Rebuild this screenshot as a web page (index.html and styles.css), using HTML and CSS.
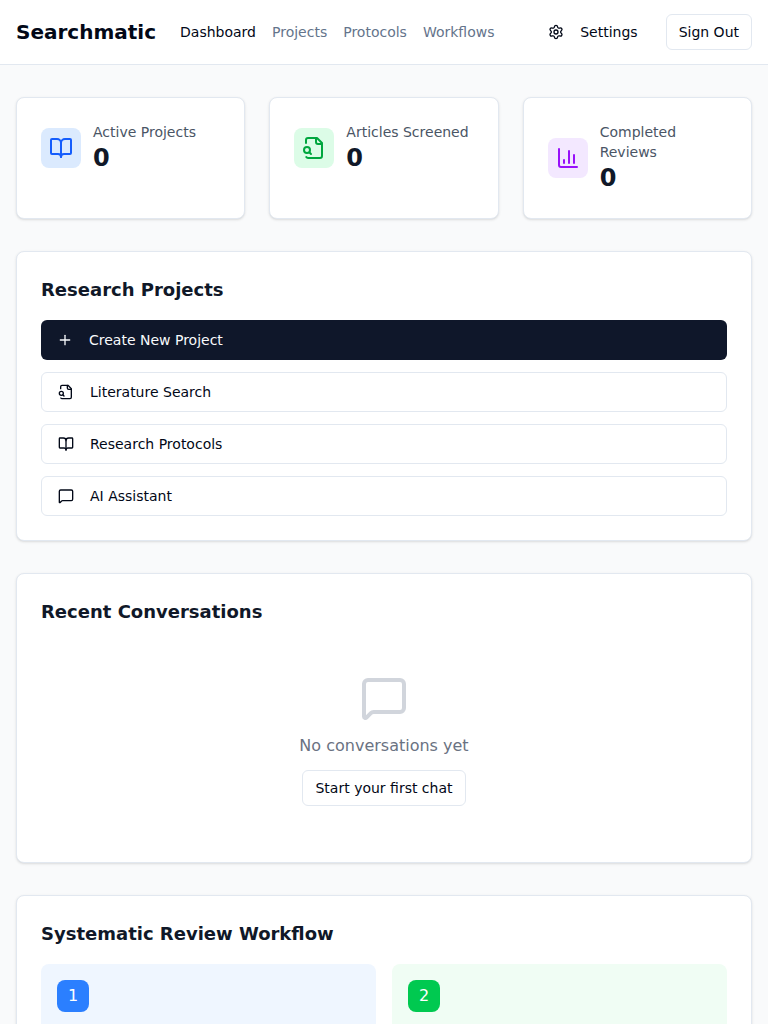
FILE: index.html
```html
<!DOCTYPE html>
<html lang="en">
<head>
<meta charset="utf-8">
<title>Searchmatic</title>
<link rel="stylesheet" href="styles.css">
</head>
<body>
<svg class="sprite" aria-hidden="true">
  <symbol id="book" viewBox="0 0 24 24"><path d="M12 7v14"/><path d="M3 18a1 1 0 0 1-1-1V4a1 1 0 0 1 1-1h5a4 4 0 0 1 4 4 4 4 0 0 1 4-4h5a1 1 0 0 1 1 1v13a1 1 0 0 1-1 1h-6a3 3 0 0 0-3 3 3 3 0 0 0-3-3z"/></symbol>
  <symbol id="file-search" viewBox="0 0 24 24"><path d="M14 2v4a2 2 0 0 0 2 2h4"/><path d="M4.268 21a2 2 0 0 0 1.727 1H18a2 2 0 0 0 2-2V7l-5-5H6a2 2 0 0 0-2 2v3"/><path d="m9 18-1.5-1.5"/><circle cx="5" cy="14" r="3"/></symbol>
  <symbol id="chart" viewBox="0 0 24 24"><path d="M3 3v16a2 2 0 0 0 2 2h16"/><path d="M18 17V9"/><path d="M13 17V5"/><path d="M8 17v-3"/></symbol>
  <symbol id="message" viewBox="0 0 24 24"><path d="M22 17a2 2 0 0 1-2 2H6.828a2 2 0 0 0-1.414.586l-2.202 2.202A.71.71 0 0 1 2 21.286V5a2 2 0 0 1 2-2h16a2 2 0 0 1 2 2z"/></symbol>
  <symbol id="plus" viewBox="0 0 24 24"><path d="M5 12h14"/><path d="M12 5v14"/></symbol>
  <symbol id="gear" viewBox="0 0 24 24"><path d="M9.671 4.136a2.34 2.34 0 0 1 4.659 0 2.34 2.34 0 0 0 3.319 1.915 2.34 2.34 0 0 1 2.33 4.033 2.34 2.34 0 0 0 0 3.831 2.34 2.34 0 0 1-2.33 4.033 2.34 2.34 0 0 0-3.319 1.915 2.34 2.34 0 0 1-4.659 0 2.34 2.34 0 0 0-3.32-1.915 2.34 2.34 0 0 1-2.33-4.033 2.34 2.34 0 0 0 0-3.831A2.34 2.34 0 0 1 6.35 6.051a2.34 2.34 0 0 0 3.319-1.915"/><circle cx="12" cy="12" r="3"/></symbol>
</svg>

<header class="header">
  <div class="brand">Searchmatic</div>
  <nav class="nav">
    <a class="nav-link active">Dashboard</a>
    <a class="nav-link">Projects</a>
    <a class="nav-link">Protocols</a>
    <a class="nav-link">Workflows</a>
  </nav>
  <div class="actions">
    <button class="btn btn-ghost"><svg class="icon"><use href="#gear"/></svg>Settings</button>
    <button class="btn btn-outline">Sign Out</button>
  </div>
</header>

<main class="main">
  <section class="stats">
    <div class="card">
      <div class="stat">
        <div class="stat-icon blue"><svg class="icon icon-md"><use href="#book"/></svg></div>
        <div><p class="stat-label">Active Projects</p><p class="stat-value">0</p></div>
      </div>
    </div>
    <div class="card">
      <div class="stat">
        <div class="stat-icon green"><svg class="icon icon-md"><use href="#file-search"/></svg></div>
        <div><p class="stat-label">Articles Screened</p><p class="stat-value">0</p></div>
      </div>
    </div>
    <div class="card">
      <div class="stat">
        <div class="stat-icon purple"><svg class="icon icon-md"><use href="#chart"/></svg></div>
        <div><p class="stat-label">Completed Reviews</p><p class="stat-value">0</p></div>
      </div>
    </div>
  </section>

  <section class="card">
    <h2 class="title">Research Projects</h2>
    <div class="list">
      <button class="btn btn-row btn-primary"><svg class="icon"><use href="#plus"/></svg>Create New Project</button>
      <button class="btn btn-row btn-outline"><svg class="icon"><use href="#file-search"/></svg>Literature Search</button>
      <button class="btn btn-row btn-outline"><svg class="icon"><use href="#book"/></svg>Research Protocols</button>
      <button class="btn btn-row btn-outline"><svg class="icon"><use href="#message"/></svg>AI Assistant</button>
    </div>
  </section>

  <section class="card">
    <h2 class="title">Recent Conversations</h2>
    <div class="empty">
      <svg class="icon icon-lg"><use href="#message"/></svg>
      <p class="empty-text">No conversations yet</p>
      <button class="btn btn-outline">Start your first chat</button>
    </div>
  </section>

  <section class="card">
    <h2 class="title">Systematic Review Workflow</h2>
    <div class="steps">
      <div class="step step-blue"><div class="step-num">1</div></div>
      <div class="step step-green"><div class="step-num">2</div></div>
    </div>
  </section>
</main>
</body>
</html>
```

FILE: styles.css
```css
* { box-sizing: border-box; margin: 0; padding: 0; }

body {
  height: 100vh;
  overflow: hidden;
  background: #f9fafb;
  color: #020817;
  font-family: "DejaVu Sans", sans-serif;
  font-size: 16px;
  line-height: 24px;
}

.sprite { display: none; }

.icon {
  flex: none;
  width: 16px;
  height: 16px;
  fill: none;
  stroke: currentColor;
  stroke-width: 2;
  stroke-linecap: round;
  stroke-linejoin: round;
}
.icon-md { width: 24px; height: 24px; }
.icon-lg { width: 48px; height: 48px; color: #d1d5dc; }

.header {
  display: flex;
  align-items: center;
  height: 65px;
  padding: 0 16px;
  background: #fff;
  border-bottom: 1px solid #e2e8f0;
}
.brand { font-size: 20px; line-height: 28px; font-weight: 700; }
.nav { display: flex; gap: 16px; margin-left: 24px; }
.nav-link { font-size: 14px; line-height: 20px; color: #64748b; }
.nav-link.active { color: #020817; }
.actions { display: flex; gap: 16px; margin-left: auto; }

.btn {
  display: inline-flex;
  align-items: center;
  justify-content: center;
  gap: 16px;
  height: 36px;
  padding: 0 12px;
  border: 0;
  border-radius: 6px;
  background: #fff;
  color: #020817;
  font: 14px/20px "DejaVu Sans", sans-serif;
  white-space: nowrap;
}
.btn-outline { border: 1px solid #e2e8f0; }
.btn-row { height: 40px; padding: 0 16px; justify-content: flex-start; }
.btn-primary { background: #0f172a; color: #f8fafc; }

.main { display: flex; flex-direction: column; gap: 32px; padding: 32px 16px; }

.card {
  padding: 24px;
  background: #fff;
  border: 1px solid #e2e8f0;
  border-radius: 8px;
  box-shadow: 0 1px 3px rgba(0, 0, 0, .1), 0 1px 2px -1px rgba(0, 0, 0, .1);
}

.stats { display: grid; grid-template-columns: repeat(3, 1fr); gap: 24px; }
.stat { display: flex; align-items: center; gap: 12px; }
.stat-icon { flex: none; padding: 8px; width: 40px; height: 40px; border-radius: 8px; }
.stat-icon .icon { display: block; }
.blue { background: #dbeafe; color: #155dfc; }
.green { background: #dcfce7; color: #00a63e; }
.purple { background: #f3e8ff; color: #9810fa; }
.stat-label { font-size: 14px; line-height: 20px; color: #4a5565; }
.stat-value { font-size: 24px; line-height: 32px; font-weight: 700; color: #101828; }

.title { margin-bottom: 16px; font-size: 18px; line-height: 28px; font-weight: 600; color: #101828; }
.list { display: flex; flex-direction: column; gap: 12px; }

.empty { display: flex; flex-direction: column; align-items: center; gap: 12px; padding: 32px 0; }
.empty-text { color: #6a7282; }

.steps { display: grid; grid-template-columns: 1fr 1fr; gap: 16px; }
.step { min-height: 140px; padding: 16px; border-radius: 8px; }
.step-blue { background: #eff6ff; }
.step-green { background: #f0fdf4; }
.step-num {
  display: flex;
  align-items: center;
  justify-content: center;
  width: 32px;
  height: 32px;
  border-radius: 8px;
  color: #fff;
}
.step-blue .step-num { background: #2b7fff; }
.step-green .step-num { background: #00c950; }
```
